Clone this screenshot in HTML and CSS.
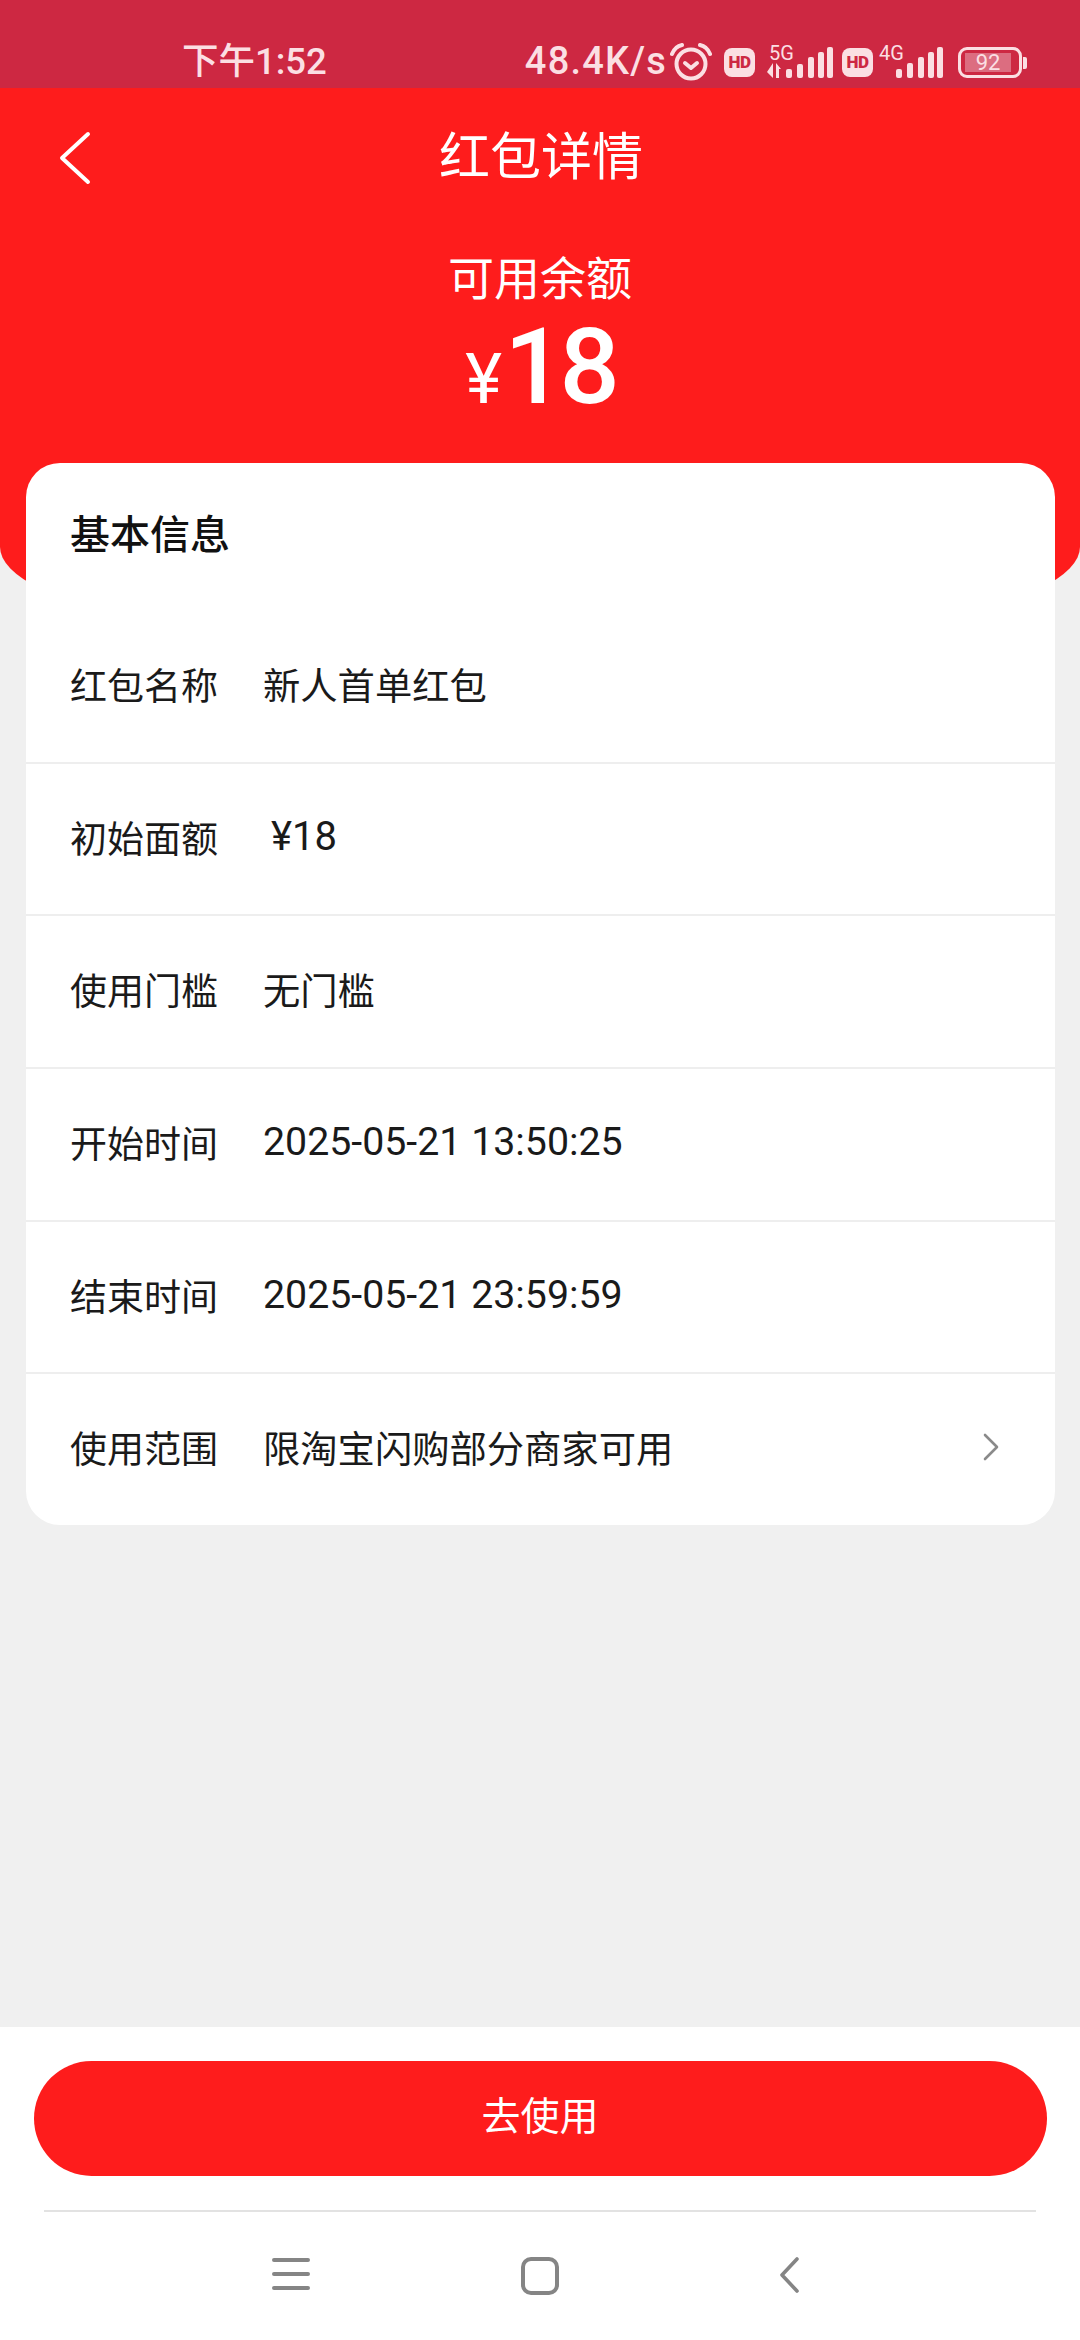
FILE: index.html
```html
<!DOCTYPE html>
<html lang="zh-CN">
<head>
    <meta charset="UTF-8">
    <meta name="viewport" content="width=device-width, initial-scale=1.0">
    <title>红包详情</title>
    <link rel="stylesheet" href="styles.css">
</head>
<body>
    <div class="page">
        <div class="status-bar">
            <span class="status-time">下午1:52</span>
            <div class="status-icons">
                <span class="status-speed">48.4K/s</span>
                <svg class="icon-alarm" width="42" height="38" viewBox="0 0 42 38">
                    <circle cx="21" cy="21" r="14.5" fill="none" stroke="#fbdfe3" stroke-width="4"/>
                    <path d="M15 20l6 5 6-5" fill="none" stroke="#fbdfe3" stroke-width="4" stroke-linecap="round" stroke-linejoin="round"/>
                    <path d="M2 11C4 6 7 3 12 2M40 11C38 6 35 3 30 2" fill="none" stroke="#fbdfe3" stroke-width="4" stroke-linecap="round"/>
                </svg>
                <span class="hd-badge">HD</span>
                <div class="signal signal-5g">
                    <span class="signal-label">5G</span>
                    <svg width="68" height="32" viewBox="0 0 68 32">
                        <path d="M7 16v15L1 25zM10 31V16l5 6h-2v9z" fill="#fbdfe3"/>
                        <rect x="20" y="22" width="6" height="9" rx="2" fill="#fbdfe3"/>
                        <rect x="31" y="17" width="6" height="14" rx="2" fill="#fbdfe3"/>
                        <rect x="42" y="10" width="6" height="21" rx="2" fill="#fbdfe3"/>
                        <rect x="52" y="5" width="6" height="26" rx="2" fill="#fbdfe3"/>
                        <rect x="61" y="0" width="6" height="31" rx="2" fill="#fbdfe3"/>
                    </svg>
                </div>
                <span class="hd-badge hd-second">HD</span>
                <div class="signal signal-4g">
                    <span class="signal-label">4G</span>
                    <svg width="48" height="32" viewBox="0 0 48 32">
                        <rect x="0" y="22" width="6" height="9" rx="2" fill="#fbdfe3"/>
                        <rect x="11" y="16" width="6" height="15" rx="2" fill="#fbdfe3"/>
                        <rect x="22" y="10" width="6" height="21" rx="2" fill="#fbdfe3"/>
                        <rect x="32" y="5" width="6" height="26" rx="2" fill="#fbdfe3"/>
                        <rect x="41" y="0" width="6" height="31" rx="2" fill="#fbdfe3"/>
                    </svg>
                </div>
                <div class="battery">
                    <div class="battery-body">
                        <span class="battery-level">92</span>
                    </div>
                    <span class="battery-nub"></span>
                </div>
            </div>
        </div>

        <div class="hero">
            <div class="nav-bar">
                <svg class="nav-back" width="32" height="54" viewBox="0 0 32 54">
                    <path d="M29 3L3 27l26 24" fill="none" stroke="#fff" stroke-width="4" stroke-linecap="round" stroke-linejoin="round"/>
                </svg>
                <h1 class="nav-title">红包详情</h1>
            </div>
            <p class="balance-label">可用余额</p>
            <p class="balance-value"><span class="balance-unit">¥</span>18</p>
        </div>

        <div class="main">
            <div class="card">
                <h2 class="card-title">基本信息</h2>
                <div class="row"><span class="row-label">红包名称</span><span class="row-value">新人首单红包</span></div>
                <div class="row row-line"><span class="row-label">初始面额</span><span class="row-value row-money">¥18</span></div>
                <div class="row row-line"><span class="row-label">使用门槛</span><span class="row-value">无门槛</span></div>
                <div class="row row-line"><span class="row-label">开始时间</span><span class="row-value row-date">2025-05-21 13:50:25</span></div>
                <div class="row row-line"><span class="row-label">结束时间</span><span class="row-value row-date">2025-05-21 23:59:59</span></div>
                <div class="row row-line">
                    <span class="row-label">使用范围</span><span class="row-value">限淘宝闪购部分商家可用</span>
                    <svg class="row-arrow" width="16" height="28" viewBox="0 0 16 28">
                        <path d="M2 2l12 12L2 26" fill="none" stroke="#8a8a8a" stroke-width="2.6" stroke-linecap="round" stroke-linejoin="round"/>
                    </svg>
                </div>
            </div>
        </div>

        <div class="footer">
            <div class="use-btn">去使用</div>
            <div class="sys-nav">
                <svg width="38" height="34" viewBox="0 0 38 34">
                    <path d="M2 3h34M2 17h34M2 31h34" fill="none" stroke="#858585" stroke-width="4" stroke-linecap="round"/>
                </svg>
                <svg width="38" height="38" viewBox="0 0 38 38">
                    <rect x="2" y="2" width="34" height="34" rx="8" fill="none" stroke="#858585" stroke-width="4"/>
                </svg>
                <svg class="sys-back" width="20" height="36" viewBox="0 0 20 36">
                    <path d="M18 2L3 18l15 16" fill="none" stroke="#858585" stroke-width="3.6" stroke-linecap="round" stroke-linejoin="round"/>
                </svg>
            </div>
        </div>
    </div>
</body>
</html>
```

FILE: styles.css
```css
body {
    margin: 0;
    font-family: Roboto, "Noto Sans CJK SC", sans-serif;
    background-color: #f0f0f0;
}
.page {
    width: 1080px;
    height: 2340px;
    display: flex;
    flex-direction: column;
    overflow: hidden;
}
h1, h2, p {
    margin: 0;
    font-weight: 400;
}

/* status bar */
.status-bar {
    height: 88px;
    flex: none;
    background-color: #cd2842;
    color: #fbdfe3;
    display: flex;
    align-items: flex-start;
    padding: 41px 53px 0 182px;
    box-sizing: border-box;
    justify-content: space-between;
}
.status-time {
    font-size: 36.5px;
    line-height: 42px;
    font-weight: 500;
}
.status-icons {
    display: flex;
    align-items: flex-start;
    margin-top: -1px;
}
.status-speed {
    font-size: 38px;
    line-height: 42px;
    font-weight: 500;
    letter-spacing: 1.2px;
}
.icon-alarm {
    margin: 3px 0 0 3px;
}
.hd-badge {
    width: 31px;
    height: 29px;
    margin: 8px 0 0 12px;
    background-color: #fbdfe3;
    border-radius: 8px;
    color: #cd2842;
    font-size: 17px;
    line-height: 29px;
    font-weight: 900;
    text-align: center;
    letter-spacing: -0.5px;
}
.hd-second {
    margin-left: 8px;
}
.signal {
    position: relative;
    height: 32px;
    margin-top: 7px;
    display: flex;
}
.signal-5g {
    margin-left: 11px;
}
.signal-4g {
    margin-left: 23px;
}
.signal-label {
    position: absolute;
    left: 3px;
    top: -4px;
    font-size: 20px;
    line-height: 20px;
}
.signal-4g .signal-label {
    left: -17px;
}
.battery {
    display: flex;
    align-items: center;
    margin: 7px 0 0 14px;
}
.battery-body {
    width: 64px;
    height: 31px;
    box-sizing: border-box;
    border: 3px solid #fbdfe3;
    border-radius: 9px;
    padding: 3px 4px;
    display: flex;
}
.battery-level {
    width: 46px;
    background-color: #dc6d80;
    color: #fbdfe3;
    font-size: 22px;
    line-height: 19px;
    text-align: center;
}
.battery-nub {
    width: 4px;
    height: 12px;
    margin-left: 1px;
    background-color: #fbdfe3;
    border-radius: 0 2px 2px 0;
}

/* red header */
.hero {
    height: 569px;
    flex: none;
    background-color: #fe1c1c;
    border-radius: 0 0 540px 540px / 0 0 110px 110px;
    color: #fff;
    text-align: center;
    box-sizing: border-box;
}
.nav-bar {
    position: relative;
    height: 136px;
    display: flex;
    justify-content: center;
    align-items: center;
}
.nav-back {
    position: absolute;
    left: 59px;
    top: 43px;
}
.nav-title {
    font-size: 51px;
    line-height: 60px;
    margin: 3px 0 0 2px;
}
.balance-label {
    font-size: 46px;
    line-height: 60px;
    margin-top: 25px;
}
.balance-value {
    font-size: 106px;
    line-height: 112px;
    font-weight: 500;
    letter-spacing: -5px;
    margin-top: 2px;
}
.balance-unit {
    font-size: 70px;
    font-weight: 400;
    letter-spacing: 0;
    margin-right: 2px;
}

/* info card */
.main {
    flex: 1;
    padding: 0 25px 0 26px;
}
.card {
    position: relative;
    margin-top: -194px;
    background-color: #fff;
    border-radius: 34px;
    height: 1062px;
    display: flex;
    flex-direction: column;
    box-sizing: border-box;
}
.card-title {
    height: 148px;
    flex: none;
    font-size: 40px;
    line-height: 146px;
    font-weight: 500;
    color: #111;
    padding-left: 44px;
    box-sizing: border-box;
}
.row {
    flex: 1;
    display: flex;
    align-items: center;
    padding: 0 56px 5px 44px;
    font-size: 37px;
    color: #1a1a1a;
}
.row-line {
    border-top: 2px solid #eeeeee;
}
.row-label {
    width: 193px;
    flex: none;
}
.row-value {
    flex: 1;
    font-size: 37.3px;
}
.row-money {
    padding-left: 8px;
    font-size: 40px;
}
.row-date {
    font-size: 39.3px;
}

/* bottom bar */
.footer {
    height: 313px;
    flex: none;
    background-color: #fff;
    display: flex;
    flex-direction: column;
    align-items: center;
}
.use-btn {
    width: 1013px;
    height: 115px;
    margin-top: 34px;
    background-color: #fe1c1c;
    border-radius: 58px;
    color: #fff;
    font-size: 39px;
    line-height: 113px;
    text-align: center;
}
.sys-nav {
    width: 992px;
    height: 130px;
    margin-top: 34px;
    border-top: 2px solid #e2e2e2;
    display: flex;
    align-items: flex-start;
    gap: 211px;
    padding: 45px 0 0 228px;
    box-sizing: border-box;
}
.sys-back {
    margin-left: 9px;
}
```
